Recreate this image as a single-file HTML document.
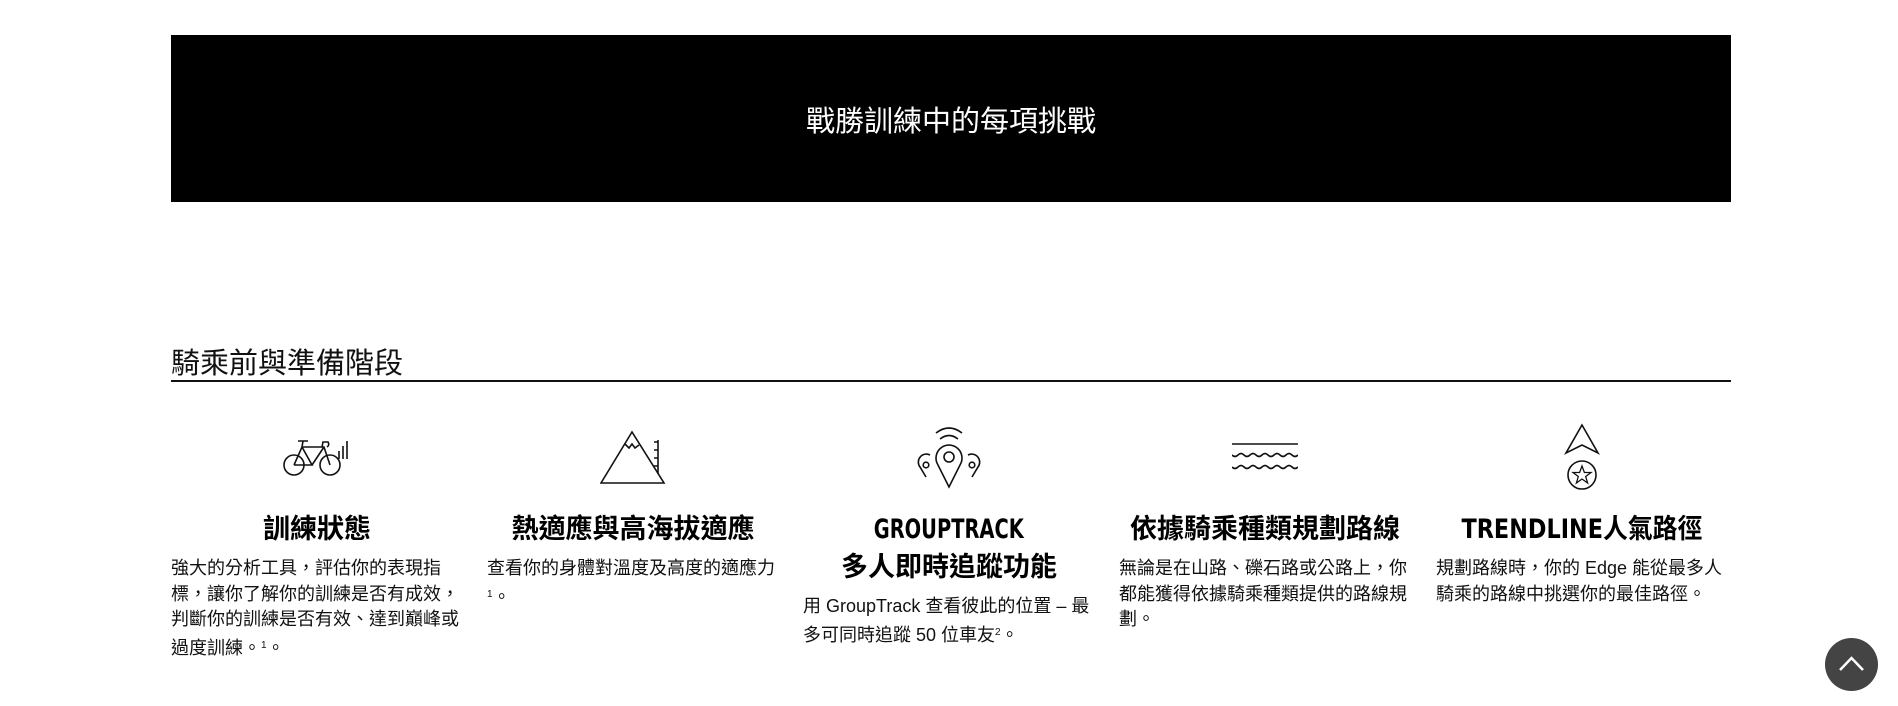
<!DOCTYPE html>
<html><head><meta charset="utf-8">
<style>
*{margin:0;padding:0;box-sizing:border-box}
body{width:1898px;height:706px;background:#fff;font-family:"Liberation Sans","Noto Sans CJK TC",sans-serif;color:#111;position:relative;overflow:hidden}
.banner{position:absolute;left:171px;top:35px;width:1560px;height:167px;background:#000;color:#fff;font-size:29px;text-align:center;line-height:175px}
.h2{position:absolute;left:171px;top:347px;font-size:29px;line-height:34px;color:#111}
.rule{position:absolute;left:171px;top:380px;width:1560px;height:2px;background:#111}
.col{position:absolute;top:418px;width:292px}
.icon{height:78px;display:flex;justify-content:center;align-items:center}
.t{text-align:center;font-family:"Liberation Sans Narrow","DejaVu Sans Condensed","Noto Sans CJK TC",sans-serif;font-weight:bold;font-size:27px;line-height:38px;margin-top:15px;color:#000}
.t span{display:inline-block;white-space:nowrap}
.t span.n{transform:scaleX(0.8)}
.t span.m{transform:scaleX(0.92)}
.p{font-size:18px;line-height:25.5px;margin-top:7px;color:#111}
sup{font-size:10px;vertical-align:6px}
.top{position:absolute;left:1825px;top:638px;width:53px;height:53px;border-radius:50%;background:#444}
</style></head><body>
<div class="banner">戰勝訓練中的每項挑戰</div>
<div class="h2">騎乘前與準備階段</div>
<div class="rule"></div>

<div class="col" style="left:171px">
<div class="icon"><svg width="70" height="40" viewBox="0 0 70 40" fill="none" stroke="#111" stroke-width="1.6"><circle cx="12" cy="28" r="10"/><circle cx="48" cy="28" r="10"/><path d="M12 28 L20 10 L42 10 L48 28 M20 10 L30 28 L12 28 M30 28 L42 10 M16 4 L26 4 M21 4 L20 10 M40 10 L41 5 L46 5 Q48 8 45 10"/><path d="M57 22 V14 M61 22 V9 M65 22 V4"/></svg></div>
<div class="t"><span>訓練狀態</span></div>
<div class="p">強大的分析工具，評估你的表現指標，讓你了解你的訓練是否有成效，判斷你的訓練是否有效、達到巔峰或過度訓練。<sup>1</sup>。</div>
</div>

<div class="col" style="left:487px">
<div class="icon"><svg width="66" height="54" viewBox="0 0 66 54" fill="none" stroke="#111" stroke-width="1.6"><path d="M1 53 L32 2 L64 53 Z M25 14 L29 18 L32 14 L35 18 L39 15"/><path d="M58 10 V44 M54 12 H58 M54 20 H58 M54 28 H58 M54 36 H58"/></svg></div>
<div class="t"><span>熱適應與高海拔適應</span></div>
<div class="p">查看你的身體對溫度及高度的適應力<br><sup>1</sup>。</div>
</div>

<div class="col" style="left:803px">
<div class="icon"><svg width="66" height="64" viewBox="0 0 66 64" fill="none" stroke="#111" stroke-width="1.6"><path d="M20 8 Q33 -2 46 8 M24 14 Q33 7 42 14"/><path d="M33 62 L22 40 A13 13 0 1 1 44 40 Z"/><circle cx="33" cy="32" r="5"/><path d="M10 52 L4 42 A8 8 0 0 1 14 30"/><path d="M56 52 L62 42 A8 8 0 0 0 52 30"/><circle cx="10" cy="40" r="2.8"/><circle cx="56" cy="40" r="2.8"/></svg></div>
<div class="t"><span class="n">GROUPTRACK</span><br><span>多人即時追蹤功能</span></div>
<div class="p">用 GroupTrack 查看彼此的位置 – 最多可同時追蹤 50 位車友<sup>2</sup>。</div>
</div>

<div class="col" style="left:1119px">
<div class="icon"><svg width="66" height="30" viewBox="0 0 66 30" fill="none" stroke="#111" stroke-width="1.6"><path d="M0 2 H66"/><path d="M0 13 q3 3 6 0 t6 0 t6 0 t6 0 t6 0 t6 0 t6 0 t6 0 t6 0 t6 0 t6 0"/><path d="M0 25 q3 3 6 0 t6 0 t6 0 t6 0 t6 0 t6 0 t6 0 t6 0 t6 0 t6 0 t6 0"/></svg></div>
<div class="t"><span>依據騎乘種類規劃路線</span></div>
<div class="p">無論是在山路、礫石路或公路上，你都能獲得依據騎乘種類提供的路線規劃。</div>
</div>

<div class="col" style="left:1436px">
<div class="icon"><svg width="40" height="68" viewBox="0 0 40 68" fill="none" stroke="#111" stroke-width="1.6"><path d="M20 2 L36 30 L20 22 L4 30 Z"/><circle cx="20" cy="52" r="14"/><path d="M20 43 L22.4 49.5 L29 49.5 L23.7 53.5 L25.6 60 L20 56 L14.4 60 L16.3 53.5 L11 49.5 L17.6 49.5 Z" stroke-width="1.3"/></svg></div>
<div class="t"><span class="m">TRENDLINE人氣路徑</span></div>
<div class="p">規劃路線時，你的 Edge 能從最多人騎乘的路線中挑選你的最佳路徑。</div>
</div>

<div class="top"><svg width="53" height="53" viewBox="0 0 53 53" fill="none" stroke="#fff" stroke-width="2.5"><path d="M15 32 L26.5 20 L38 32"/></svg></div>
</body></html>
